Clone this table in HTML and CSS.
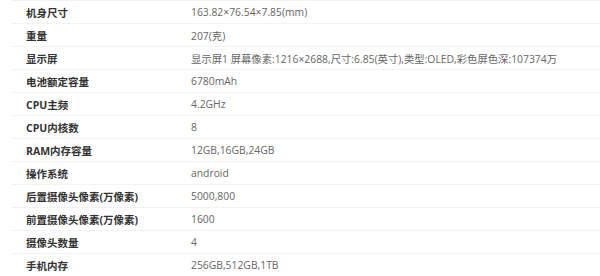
FILE: index.html
```html
<!DOCTYPE html>
<html lang="zh-CN">
<head>
<meta charset="utf-8">
<title>参数</title>
<link rel="stylesheet" href="styles.css">
</head>
<body>
<div class="specs">
  <div class="row"><div class="key">机身尺寸</div><div class="val">163.82×76.54×7.85(mm)</div></div>
  <div class="row"><div class="key">重量</div><div class="val">207(克)</div></div>
  <div class="row"><div class="key">显示屏</div><div class="val">显示屏1 屏幕像素:1216×2688,尺寸:6.85(英寸),类型:OLED,彩色屏色深:107374万</div></div>
  <div class="row"><div class="key">电池额定容量</div><div class="val">6780mAh</div></div>
  <div class="row"><div class="key">CPU主频</div><div class="val">4.2GHz</div></div>
  <div class="row"><div class="key">CPU内核数</div><div class="val">8</div></div>
  <div class="row"><div class="key">RAM内存容量</div><div class="val">12GB,16GB,24GB</div></div>
  <div class="row"><div class="key">操作系统</div><div class="val">android</div></div>
  <div class="row"><div class="key">后置摄像头像素(万像素)</div><div class="val">5000,800</div></div>
  <div class="row"><div class="key">前置摄像头像素(万像素)</div><div class="val">1600</div></div>
  <div class="row"><div class="key">摄像头数量</div><div class="val">4</div></div>
  <div class="row"><div class="key">手机内存</div><div class="val">256GB,512GB,1TB</div></div>
</div>
</body>
</html>
```
FILE: styles.css
```css
html, body {
  margin: 0;
  padding: 0;
  background: #ffffff;
}
body {
  font-family: "Open Sans", "Noto Sans CJK SC", sans-serif;
  font-size: 10.5px;
  overflow: hidden;
}
.specs {
  padding-left: 12px;
}
.row {
  display: flex;
  align-items: center;
  height: 23px;
  box-sizing: border-box;
  border-top: 1px solid #f1f2f5;
}
.key {
  width: 165px;
  padding-left: 14px;
  flex-shrink: 0;
  font-weight: bold;
  color: #333333;
}
.val {
  font-size: 10.35px;
  color: #666666;
  white-space: nowrap;
}
```
